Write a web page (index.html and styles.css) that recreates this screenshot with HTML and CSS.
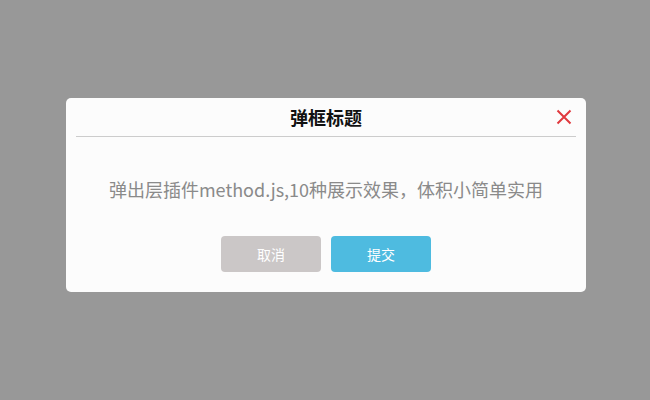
FILE: index.html
```html
<!DOCTYPE html>
<html>
<head>
<meta charset="utf-8">
<link rel="stylesheet" href="styles.css">
</head>
<body>
<div class="overlay">
  <div class="dialog">
    <div class="head">
      <h3 class="title">弹框标题</h3>
      <span class="close"><svg width="16" height="16" viewBox="0 0 16 16"><path d="M1.5 1.5L14.5 14.5M14.5 1.5L1.5 14.5" stroke="#e0393e" stroke-width="2" fill="none"/></svg></span>
    </div>
    <p class="msg">弹出层插件method.js,10种展示效果，体积小简单实用</p>
    <div class="btns">
      <button class="btn cancel">取消</button>
      <button class="btn ok">提交</button>
    </div>
  </div>
</div>
</body>
</html>
```
FILE: styles.css
```css
html, body { margin: 0; padding: 0; }
body { width: 650px; height: 400px; background: #989898; font-family: "Noto Sans CJK SC", "Noto Sans", sans-serif; }
.overlay { height: 400px; display: flex; align-items: center; justify-content: center; }
.dialog { width: 520px; height: 194px; background: #fcfcfc; border-radius: 5px; box-sizing: border-box; padding: 0 10px; margin-top: -10px; margin-left: 2px; }
.head { position: relative; height: 38px; border-bottom: 1px solid #cccccc; display: flex; align-items: center; justify-content: center; }
.title { margin: 0; font-size: 18px; font-weight: bold; color: #111; line-height: 38px; }
.close { position: absolute; right: 4px; top: 11px; width: 16px; height: 16px; display: block; }
.close svg { display: block; }
.msg { margin: 0; padding-top: 37px; text-align: center; font-size: 18px; color: #8a8a8a; line-height: 30px; }
.btns { display: flex; justify-content: center; gap: 10px; margin-top: 32px; }
.btn { width: 100px; height: 36px; border: none; border-radius: 4px; color: #fff; font-family: inherit; font-size: 14px; padding: 0; }
.cancel { background: #cbc7c7; }
.ok { background: #4ebbe0; }
```
